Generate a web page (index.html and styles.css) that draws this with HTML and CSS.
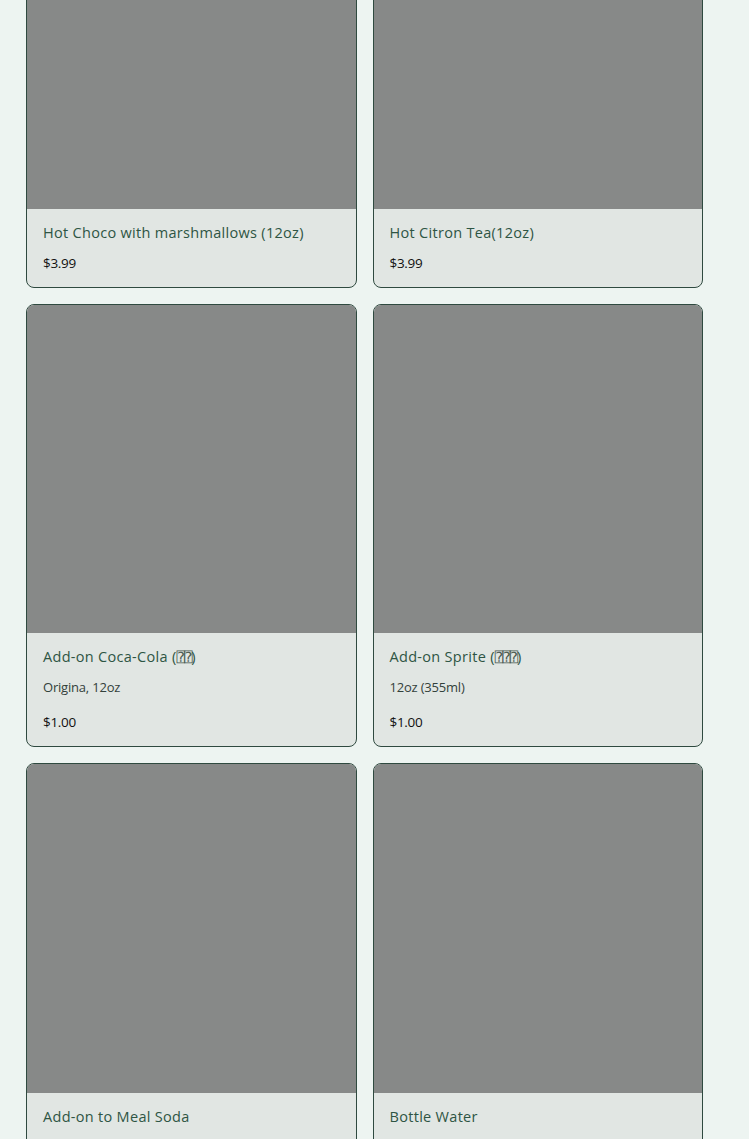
FILE: index.html
```html
<!DOCTYPE html>
<html lang="en">
<head>
    <meta charset="UTF-8">
    <meta name="viewport" content="width=device-width, initial-scale=1.0">
    <title>Drinks</title>
    <link rel="stylesheet" href="styles.css">
</head>
<body>

    <div class="menu-grid">
        <div class="item-card">
            <div class="item-photo"></div>
            <div class="item-info">
                <h3 class="item-name">Hot Choco with marshmallows (12oz)</h3>
                <p class="item-price">$3.99</p>
            </div>
        </div>
        <div class="item-card">
            <div class="item-photo"></div>
            <div class="item-info">
                <h3 class="item-name">Hot Citron Tea(12oz)</h3>
                <p class="item-price">$3.99</p>
            </div>
        </div>
        <div class="item-card">
            <div class="item-photo"></div>
            <div class="item-info">
                <h3 class="item-name">Add-on Coca-Cola (<span class="tofu">⍰⍰</span>)</h3>
                <p class="item-desc">Origina, 12oz</p>
                <p class="item-price">$1.00</p>
            </div>
        </div>
        <div class="item-card">
            <div class="item-photo"></div>
            <div class="item-info">
                <h3 class="item-name">Add-on Sprite (<span class="tofu">⍰⍰⍰</span>)</h3>
                <p class="item-desc">12oz (355ml)</p>
                <p class="item-price">$1.00</p>
            </div>
        </div>
        <div class="item-card">
            <div class="item-photo"></div>
            <div class="item-info">
                <h3 class="item-name">Add-on to Meal Soda</h3>
                <p class="item-desc">Coke, Diet Coke, Sprite, Ginger Ale</p>
                <p class="item-price">$1.00</p>
            </div>
        </div>
        <div class="item-card">
            <div class="item-photo"></div>
            <div class="item-info">
                <h3 class="item-name">Bottle Water</h3>
                <p class="item-desc">16.9oz (500ml)</p>
                <p class="item-price">$1.00</p>
            </div>
        </div>
    </div>

</body>
</html>
```

FILE: styles.css
```css
body {
    margin: 0;
    padding: 0;
    background-color: #edf4f1;
    font-family: 'Open Sans', 'Liberation Sans', sans-serif;
    overflow: hidden;
}

/* page is scrolled: first row starts above the window */
.menu-grid {
    display: grid;
    grid-template-columns: 1fr 1fr;
    gap: 16px;
    width: 677px;
    margin: -121px 0 0 26px;
}

.item-card {
    border: 1px solid #2f4a40;
    border-radius: 8px;
    overflow: hidden;
    background-color: #e1e6e3;
}

.item-photo {
    aspect-ratio: 1 / 1;
    background-color: #878988;
}

.item-info {
    padding: 14px 16px 14px;
}

.item-name {
    margin: 0 0 10px;
    font-size: 14.5px;
    line-height: 20px;
    font-weight: normal;
    color: #2e5544;
    letter-spacing: 0.3px;
}

.item-name .tofu {
    font-family: 'DejaVu Sans Mono', 'DejaVu Sans', monospace;
    font-size: 14px;
    letter-spacing: -1px;
    color: #4a5a52;
}

.item-desc {
    margin: 0 0 15px;
    font-size: 13px;
    line-height: 20px;
    color: #33413b;
    letter-spacing: -0.2px;
}

.item-price {
    margin: 0;
    font-size: 13.5px;
    line-height: 20px;
    color: #111;
    letter-spacing: -0.3px;
}
```
